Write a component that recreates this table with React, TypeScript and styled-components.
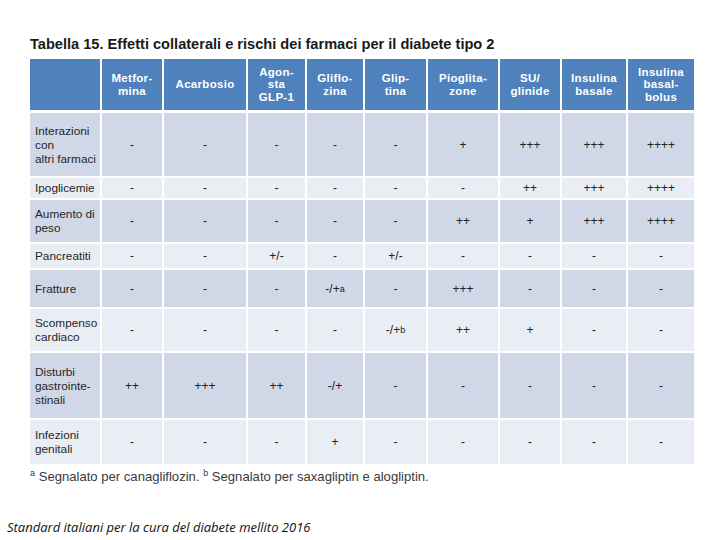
import styled, { createGlobalStyle } from 'styled-components';

const GlobalStyle = createGlobalStyle`
	body {
		margin: 0;
		background: #ffffff;
		font-family: 'Liberation Sans', Arial, sans-serif;
	}
`;

const COLUMNS = '70px 60px 82px 57px 56px 61px 70px 60px 64px 66px';

const Page = styled.div`
	width: 720px;
	height: 540px;
	display: flex;
	flex-direction: column;
	box-sizing: border-box;
	padding-top: 36px;
	padding-bottom: 5px;
	overflow: hidden;
`;

const Content = styled.div`
	padding-left: 30px;
	display: flex;
	flex-direction: column;
`;

const Title = styled.h1`
	margin: 0 0 7px;
	font-size: 14.6px;
	line-height: 16px;
	font-weight: 700;
	color: #1a1a1a;
`;

const Table = styled.div`
	display: flex;
	flex-direction: column;
	gap: 2px;
	width: 664px;
	background: #ffffff;
`;

type RowProps = {
	$height: number;
	$header?: boolean;
};
const Row = styled.div<RowProps>`
	display: grid;
	grid-template-columns: ${COLUMNS};
	column-gap: 2px;
	height: ${({ $height }) => $height}px;
	margin-bottom: ${({ $header }) => ($header ? '1px' : '0')};
`;

type CellProps = {
	$tone: 'header' | 'dark' | 'light';
};
const toneColor = { header: '#4f81bd', dark: '#d0d8e8', light: '#e9edf4' };

const Cell = styled.div<CellProps>`
	display: flex;
	align-items: center;
	justify-content: center;
	text-align: center;
	background: ${({ $tone }) => toneColor[$tone]};
	font-size: 12px;
	line-height: 14px;
	color: #222222;
`;

const HeadCell = styled(Cell)`
	color: #ffffff;
	font-weight: 700;
	font-size: 11.5px;
	line-height: 12.5px;
	letter-spacing: 0.3px;
	white-space: pre-line;
`;

const LabelCell = styled(Cell)`
	justify-content: flex-start;
	text-align: left;
	padding-left: 5px;
	white-space: pre-line;
	font-size: 11.8px;
	color: #262626;
`;

const Sup = styled.sup`
	font-size: 9px;
	line-height: 0;
	vertical-align: 5px;
`;

const Footnote = styled.p`
	margin: 5px 0 0;
	font-size: 13.1px;
	line-height: 16px;
	color: #3a3a3a;
`;

const Caption = styled.p`
	margin: auto 0 0;
	padding-left: 7px;
	font-family: 'Open Sans', 'Liberation Sans', sans-serif;
	font-style: italic;
	font-size: 13px;
	line-height: 16px;
	color: #111111;
`;

const headers = [
	'Metfor-\nmina',
	'Acarbosio',
	'Agon-\nsta\nGLP-1',
	'Gliflo-\nzina',
	'Glip-\ntina',
	'Pioglita-\nzone',
	'SU/\nglinide',
	'Insulina\nbasale',
	'Insulina\nbasal-\nbolus',
];

type RowData = { label: string; values: string[]; height: number };

const rows: RowData[] = [
	{ label: 'Interazioni\ncon\naltri farmaci', values: ['-', '-', '-', '-', '-', '+', '+++', '+++', '++++'], height: 63 },
	{ label: 'Ipoglicemie', values: ['-', '-', '-', '-', '-', '-', '++', '+++', '++++'], height: 20 },
	{ label: 'Aumento di\npeso', values: ['-', '-', '-', '-', '-', '++', '+', '+++', '++++'], height: 42 },
	{ label: 'Pancreatiti', values: ['-', '-', '+/-', '-', '+/-', '-', '-', '-', '-'], height: 24 },
	{ label: 'Fratture', values: ['-', '-', '-', '-/+^a', '-', '+++', '-', '-', '-'], height: 37 },
	{ label: 'Scompenso\ncardiaco', values: ['-', '-', '-', '-', '-/+^b', '++', '+', '-', '-'], height: 42 },
	{ label: 'Disturbi\ngastrointe-\nstinali', values: ['++', '+++', '++', '-/+', '-', '-', '-', '-', '-'], height: 65 },
	{ label: 'Infezioni\ngenitali', values: ['-', '-', '-', '+', '-', '-', '-', '-', '-'], height: 44 },
];

const renderValue = (value: string) => {
	const [text, note] = value.split('^');
	return (
		<>
			{text}
			{note && <Sup>{note}</Sup>}
		</>
	);
};

const App = () => {
	return (
		<Page>
			<GlobalStyle />
			<Content>
				<Title>Tabella 15. Effetti collaterali e rischi dei farmaci per il diabete tipo 2</Title>
				<Table>
					<Row $height={51} $header>
						<HeadCell $tone='header' />
						{headers.map((h) => (
							<HeadCell key={h} $tone='header'>
								{h}
							</HeadCell>
						))}
					</Row>
					{rows.map((row, i) => {
						const tone = i % 2 === 0 ? 'dark' : 'light';
						return (
							<Row key={row.label} $height={row.height}>
								<LabelCell $tone={tone}>{row.label}</LabelCell>
								{row.values.map((v, j) => (
									<Cell key={j} $tone={tone}>
										{renderValue(v)}
									</Cell>
								))}
							</Row>
						);
					})}
				</Table>
				<Footnote>
					<Sup>a</Sup> Segnalato per canagliflozin. <Sup>b</Sup> Segnalato per saxagliptin e alogliptin.
				</Footnote>
			</Content>
			<Caption>Standard italiani per la cura del diabete mellito 2016</Caption>
		</Page>
	);
};

export default App;
